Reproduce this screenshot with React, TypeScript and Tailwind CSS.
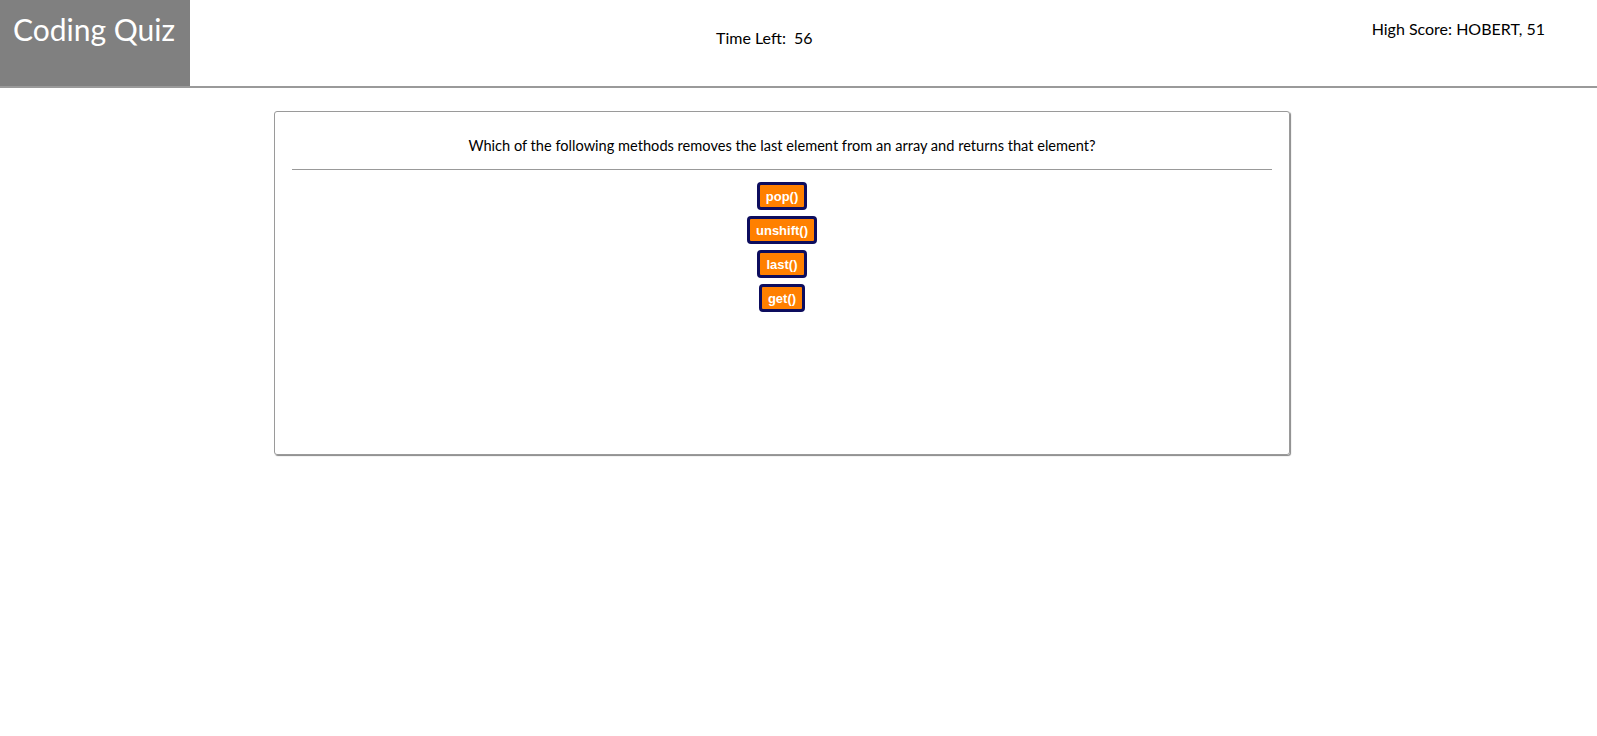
import React from "react";

const answers = ["pop()", "unshift()", "last()", "get()"];

export default function App() {
  return (
    <div className="min-h-screen bg-white text-black" style={{ fontFamily: "Lato, 'Open Sans', sans-serif" }}>
      <header className="flex h-[88px] border-b-2 border-[#9a9a9a]">
        <div className="w-[190px] h-[86px] bg-[#808080] pl-[13px] pt-[10px]">
          <h1 className="text-[30px] leading-[38px] text-white">Coding Quiz</h1>
        </div>
        <div className="pl-[526px] pt-[27px] text-[16px] leading-[21px]">Time Left:&nbsp;&nbsp;56</div>
        <div className="ml-auto pr-[52px] pt-[18px] text-[16px] leading-[21px]">High Score: HOBERT, 51</div>
      </header>
      <main className="pt-[23px]">
        <div className="ml-[274px] w-[1016px] h-[344px] rounded-[3px] border border-[#9a9a9a] shadow-[1px_1px_1px_#888] px-[17px] pt-[24px]">
          <p className="text-center text-[14.6px] leading-[20px]">
            Which of the following methods removes the last element from an array and returns that element?
          </p>
          <hr className="mt-[13px] border-t border-[#999]" />
          <div className="mt-[12px] flex flex-col items-center gap-[6px]">
            {answers.map((a) => (
              <button
                key={a}
                className="h-[28px] rounded-[4px] border-[3px] border-[#0d0d5e] bg-[#ff8000] px-[6px] text-[13px] font-bold leading-[15px] text-white"
                style={{ fontFamily: "'Liberation Sans', Arial, sans-serif" }}
              >
                {a}
              </button>
            ))}
          </div>
        </div>
      </main>
    </div>
  );
}
